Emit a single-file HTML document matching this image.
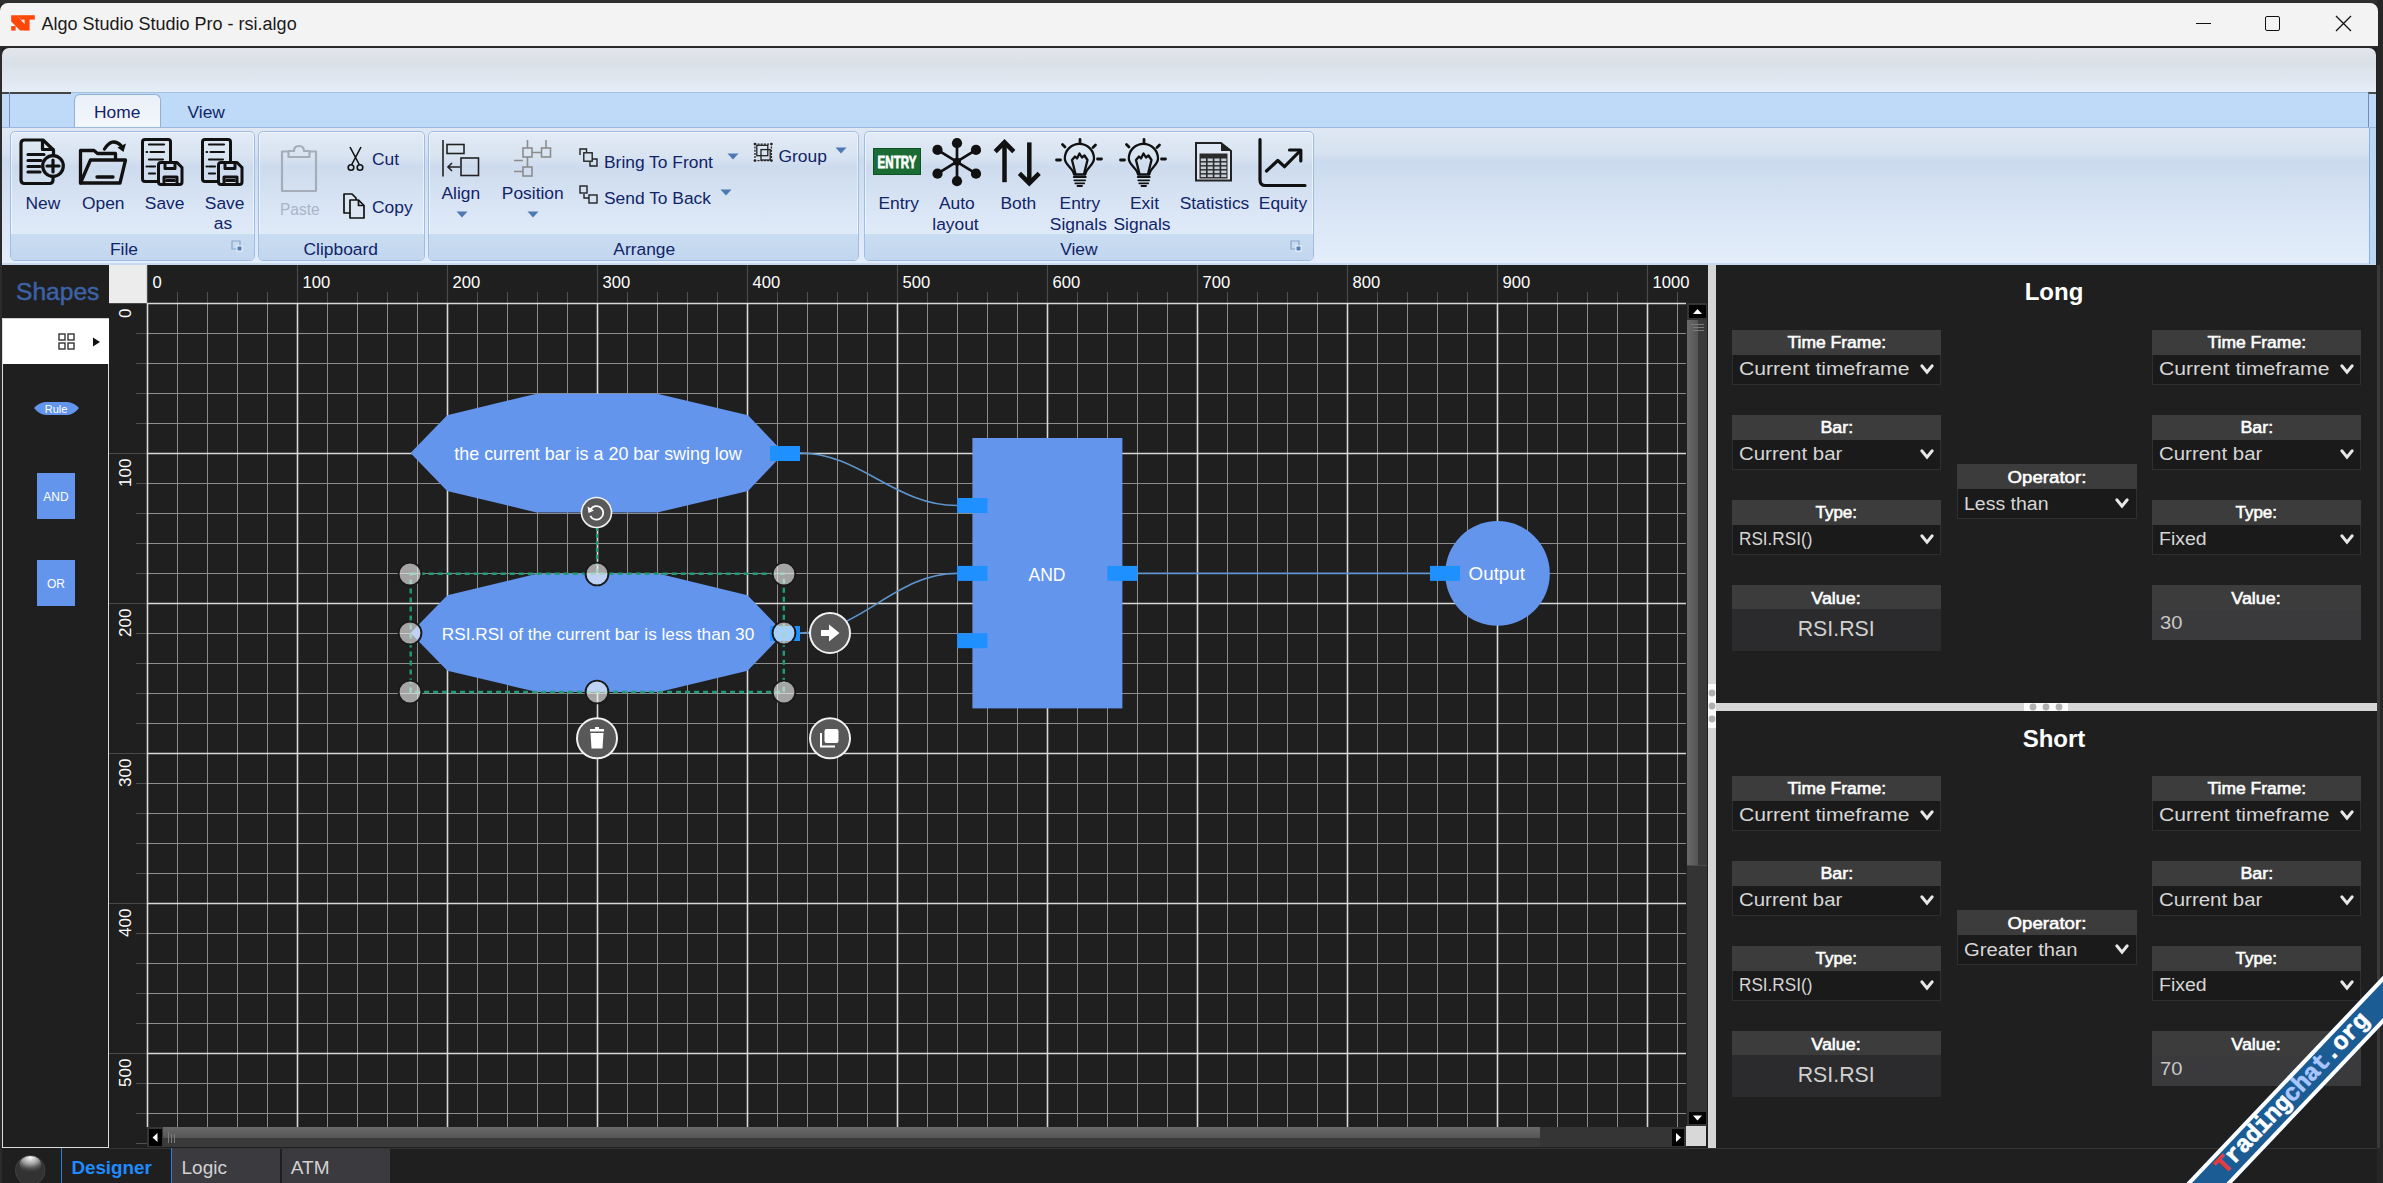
<!DOCTYPE html>
<html><head><meta charset="utf-8"><title>Algo Studio</title>
<style>
html,body{margin:0;padding:0;}
body{width:2383px;height:1183px;overflow:hidden;position:relative;background:#1f1f1f;font-family:"Liberation Sans",sans-serif;}
.t{position:absolute;line-height:1;white-space:nowrap;}
svg{position:absolute;overflow:visible;}
</style></head><body>
<div style="position:absolute;left:0px;top:0px;width:2383px;height:4px;background:#2e2e2e;"></div>
<div style="position:absolute;left:2377px;top:0px;width:6px;height:1183px;background:#262626;"></div>
<div style="position:absolute;left:0px;top:3px;width:2378px;height:43px;background:#f3f3f3;border-radius:8px 8px 0 0;"></div>
<svg style="left:0px;top:0px" width="40" height="40" viewBox="0 0 40 40"><g fill="#ff4708">
<path d="M21.4 15.2 H34.8 V19.6 H21.4 Z"/><path d="M24.6 19 H29.6 V30.6 H24.6 Z"/>
<path d="M11.2 15.2 H16.4 L25.3 24.8 V30.6 H20.1 L11.2 21.5 Z"/><path d="M11.2 26.1 H15.6 V30.6 H11.2 Z"/><path d="M16 15.2 H21.8 V20.1 H21.2 Z"/></g></svg>
<div class="t" style="left:41.5px;top:14.6px;font-size:18px;color:#1a1a1a;font-weight:400;">Algo Studio Studio Pro - rsi.algo</div>
<div style="position:absolute;left:2196px;top:23px;width:15px;height:1px;background:#111;"></div>
<div style="position:absolute;left:2265px;top:16px;width:13px;height:13px;border:1.4px solid #111;border-radius:2px;"></div>
<svg style="left:2335px;top:15px" width="17" height="17" viewBox="0 0 17 17">
<path d="M1 1 L16 16 M16 1 L1 16" stroke="#111" stroke-width="1.3"/></svg>
<div style="position:absolute;left:0px;top:46px;width:2378px;height:2px;background:#2b2b2b;"></div>
<div style="position:absolute;left:0px;top:46px;width:2px;height:1137px;background:#2b2b2b;"></div>
<div style="position:absolute;left:2px;top:48px;width:2374px;height:44px;background:linear-gradient(#e3e6eb 0%,#dae0e8 35%,#e0e7f0 70%,#e5edf7 100%);border-radius:7px 7px 0 0;"></div>
<div style="position:absolute;left:2px;top:92px;width:2374px;height:35px;background:#bedaf8;border-top:1px solid #a6bfdd;box-sizing:border-box;"></div>
<div style="position:absolute;left:2px;top:92px;width:69px;height:2px;background:#454545;"></div>
<div style="position:absolute;left:9px;top:92px;width:1px;height:35px;background:#7a98bf;"></div>
<div style="position:absolute;left:2px;top:127px;width:1px;height:137px;background:#a9c3e3;"></div>
<div style="position:absolute;left:6px;top:127px;width:1px;height:137px;background:#a9c3e3;"></div>
<div style="position:absolute;left:2368px;top:92px;width:8px;height:35px;border-left:1px solid #6f8fb8;border-top:2px solid #4a4a4a;box-sizing:border-box;"></div>
<div style="position:absolute;left:74px;top:94px;width:87px;height:34px;background:linear-gradient(#eaf0f8,#f4f7fc);border:1px solid #90b0d8;border-bottom:none;border-radius:6px 6px 0 0;box-sizing:border-box;"></div>
<div class="t" style="left:94.0px;top:104.0px;font-size:17.4px;color:#112468;font-weight:400;">Home</div>
<div class="t" style="left:187.5px;top:104.0px;font-size:17.4px;color:#112468;font-weight:400;">View</div>
<div style="position:absolute;left:2px;top:127px;width:2374px;height:138px;background:linear-gradient(#dfe8f3 0%,#d6e2f1 18%,#cbdaee 24%,#d1dff1 40%,#dae6f6 65%,#e4eefb 100%);border-top:1px solid #9ab8dd;box-sizing:border-box;"></div>
<div style="position:absolute;left:2px;top:263px;width:2374px;height:2px;background:#c8daf0;"></div>
<div style="position:absolute;left:2369px;top:128px;width:7px;height:136px;border-left:1px solid #8fb0da;box-sizing:border-box;background:#bcd6f6;"></div>
<div style="position:absolute;left:10px;top:131px;width:245px;height:130px;border:1px solid #9fbde2;border-radius:5px;box-sizing:border-box;background:linear-gradient(#e2ebf6 0%,#d8e3f1 20%,#cddbee 27%,#d3e0f1 42%,#dbe7f6 65%,#e3eefa 100%);box-shadow:inset 0 0 0 1px rgba(255,255,255,0.55);"></div>
<div style="position:absolute;left:11px;top:234px;width:243px;height:26px;background:linear-gradient(#c9dcf1,#c2d7ef);border-radius:0 0 4px 4px;"></div>
<div class="t" style="left:110.0px;top:240.7px;font-size:17.4px;color:#112468;font-weight:400;">File</div>
<svg style="left:231px;top:240px" width="12" height="12" viewBox="0 0 12 12">
<path d="M1 1 H9 V9 H1 Z" fill="none" stroke="#8aa6cc" stroke-width="1.2"/><path d="M5.5 5.5 H11.5 V11.5 H5.5 Z" fill="#f4f8fd"/><path d="M6.5 6.5 H10.5 V10.5 H6.5 Z" fill="#4f7cb8"/></svg>
<div style="position:absolute;left:258px;top:131px;width:167px;height:130px;border:1px solid #9fbde2;border-radius:5px;box-sizing:border-box;background:linear-gradient(#e2ebf6 0%,#d8e3f1 20%,#cddbee 27%,#d3e0f1 42%,#dbe7f6 65%,#e3eefa 100%);box-shadow:inset 0 0 0 1px rgba(255,255,255,0.55);"></div>
<div style="position:absolute;left:259px;top:234px;width:165px;height:26px;background:linear-gradient(#c9dcf1,#c2d7ef);border-radius:0 0 4px 4px;"></div>
<div class="t" style="left:303.5px;top:240.7px;font-size:17.4px;color:#112468;font-weight:400;">Clipboard</div>
<div style="position:absolute;left:428px;top:131px;width:431px;height:130px;border:1px solid #9fbde2;border-radius:5px;box-sizing:border-box;background:linear-gradient(#e2ebf6 0%,#d8e3f1 20%,#cddbee 27%,#d3e0f1 42%,#dbe7f6 65%,#e3eefa 100%);box-shadow:inset 0 0 0 1px rgba(255,255,255,0.55);"></div>
<div style="position:absolute;left:429px;top:234px;width:429px;height:26px;background:linear-gradient(#c9dcf1,#c2d7ef);border-radius:0 0 4px 4px;"></div>
<div class="t" style="left:613.3px;top:240.7px;font-size:17.4px;color:#112468;font-weight:400;">Arrange</div>
<div style="position:absolute;left:864px;top:131px;width:450px;height:130px;border:1px solid #9fbde2;border-radius:5px;box-sizing:border-box;background:linear-gradient(#e2ebf6 0%,#d8e3f1 20%,#cddbee 27%,#d3e0f1 42%,#dbe7f6 65%,#e3eefa 100%);box-shadow:inset 0 0 0 1px rgba(255,255,255,0.55);"></div>
<div style="position:absolute;left:865px;top:234px;width:448px;height:26px;background:linear-gradient(#c9dcf1,#c2d7ef);border-radius:0 0 4px 4px;"></div>
<div class="t" style="left:1060.2px;top:240.7px;font-size:17.4px;color:#112468;font-weight:400;">View</div>
<svg style="left:1290px;top:240px" width="12" height="12" viewBox="0 0 12 12">
<path d="M1 1 H9 V9 H1 Z" fill="none" stroke="#8aa6cc" stroke-width="1.2"/><path d="M5.5 5.5 H11.5 V11.5 H5.5 Z" fill="#f4f8fd"/><path d="M6.5 6.5 H10.5 V10.5 H6.5 Z" fill="#4f7cb8"/></svg>
<svg style="left:19px;top:138px" width="48" height="48" viewBox="0 0 48 48"><g fill="none" stroke="#111" stroke-width="3.2" stroke-linejoin="round" stroke-linecap="round">
<path d="M34.5 17 V12 L24 2 H5.5 Q2 2 2 5.5 V42 Q2 45.5 5.5 45.5 H30.5 Q34 45.5 34 42 V39"/>
<path d="M23.5 2.5 V11.5 H34"/>
<circle cx="34" cy="28" r="10.3"/>
<path d="M34 22 V34 M28 28 H40"/>
<path d="M9 16.5 H25 M9 22.5 H22 M9 28.5 H21 M9 34 H21"/></g></svg>
<svg style="left:78px;top:138px" width="50" height="48" viewBox="0 0 50 48"><g fill="none" stroke="#111" stroke-width="3.3" stroke-linejoin="round" stroke-linecap="round">
<path d="M2.5 45 V12.5 H16 L19.5 15.5 H37.5 V21.5"/>
<path d="M2.5 45 L12.5 22 H47.5 L42 45 Z"/>
<path d="M19 39 H35"/>
<path d="M26.5 11 Q34 -1 43 7.5"/></g>
<path d="M39.5 9.5 L48 5.5 L45.5 14 Z" fill="#111"/></svg>
<svg style="left:141px;top:138px" width="44" height="49" viewBox="0 0 44 49"><g fill="none" stroke="#111" stroke-width="3" stroke-linejoin="round" stroke-linecap="round">
<path d="M17 43.5 H4 Q1.5 43.5 1.5 41 V4 Q1.5 1.5 4 1.5 H27 Q29.5 1.5 29.5 4 V23"/>
<path d="M8 6.5 H23 M9.5 14 H23 M8 21.5 H22 M8 28.5 H14 M8 35.5 H14" stroke-width="2.2"/><path d="M5.5 14 H6.2 M5.5 28.5 H6.2" stroke-width="2"/>
<path d="M20 24.5 H36 L41 29.5 V44 Q41 46.5 38.5 46.5 H20 Q17.5 46.5 17.5 44 V27 Q17.5 24.5 20 24.5 Z"/>
<path d="M24 25 V30.5 H34 V25"/>
<path d="M23 46 V39 H36 V46"/><path d="M25.5 42.5 H33.5"/></g></svg>
<svg style="left:201px;top:138px" width="44" height="49" viewBox="0 0 44 49"><g fill="none" stroke="#111" stroke-width="3" stroke-linejoin="round" stroke-linecap="round">
<path d="M17 43.5 H4 Q1.5 43.5 1.5 41 V4 Q1.5 1.5 4 1.5 H27 Q29.5 1.5 29.5 4 V23"/>
<path d="M8 6.5 H23 M9.5 14 H23 M8 21.5 H22 M8 28.5 H14 M8 35.5 H14" stroke-width="2.2"/><path d="M5.5 14 H6.2 M5.5 28.5 H6.2" stroke-width="2"/>
<path d="M20 24.5 H36 L41 29.5 V44 Q41 46.5 38.5 46.5 H20 Q17.5 46.5 17.5 44 V27 Q17.5 24.5 20 24.5 Z"/>
<path d="M24 25 V30.5 H34 V25"/>
<path d="M23 46 V39 H36 V46"/><path d="M25.5 42.5 H33.5"/></g></svg>
<div class="t" style="left:25.5px;top:195.2px;font-size:17.4px;color:#112468;font-weight:400;">New</div>
<div class="t" style="left:82.0px;top:195.2px;font-size:17.4px;color:#112468;font-weight:400;">Open</div>
<div class="t" style="left:144.8px;top:195.2px;font-size:17.4px;color:#112468;font-weight:400;">Save</div>
<div class="t" style="left:204.8px;top:195.2px;font-size:17.4px;color:#112468;font-weight:400;">Save</div>
<div class="t" style="left:213.8px;top:215.4px;font-size:17.4px;color:#112468;font-weight:400;">as</div>
<svg style="left:279px;top:144px" width="40" height="50" viewBox="0 0 40 50"><g fill="none" stroke="#a4adb8" stroke-width="2.2" stroke-linejoin="round">
<path d="M9.5 7.5 H3 V47 H37 V7.5 H30.5"/>
<path d="M9.5 13 V7 H15 Q15 2 20 2 Q25 2 25 7 H30.5 V13 Z"/></g></svg>
<div class="t" style="left:279.5px;top:200.8px;font-size:17.4px;color:#a9b4c6;font-weight:400;transform:scaleX(0.89);transform-origin:0 0;">Paste</div>
<svg style="left:346px;top:146px" width="20" height="26" viewBox="0 0 20 26"><g fill="none" stroke="#111" stroke-width="1.6">
<path d="M4 1 L13.5 19 M15 1 L5.5 19"/><circle cx="5" cy="21.5" r="2.8"/><circle cx="14" cy="21.5" r="2.8"/></g></svg>
<div class="t" style="left:372.0px;top:150.8px;font-size:17.4px;color:#112468;font-weight:400;">Cut</div>
<svg style="left:343px;top:193px" width="24" height="27" viewBox="0 0 24 27"><g fill="#dce6f3" stroke="#111" stroke-width="1.7" stroke-linejoin="round">
<path d="M1 1 H9 L13 5 V20 H1 Z"/><path d="M7 7 H15.5 L21 12.5 V25 H7 Z"/><path d="M15.5 7 V12.5 H21" fill="none"/></g></svg>
<div class="t" style="left:372.0px;top:199.2px;font-size:17.4px;color:#112468;font-weight:400;">Copy</div>
<svg style="left:441px;top:139px" width="40" height="40" viewBox="0 0 40 40"><g fill="none" stroke="#222" stroke-width="1.6">
<path d="M2 1 V37.5"/><rect x="6" y="5.5" width="17" height="9"/><rect x="20" y="19" width="17.5" height="17.5"/>
<path d="M19 28 H7 M11 24 L7 28 L11 32"/></g></svg>
<div class="t" style="left:441.5px;top:184.6px;font-size:17.4px;color:#112468;font-weight:400;">Align</div>
<svg style="left:456px;top:211px" width="12" height="7" viewBox="0 0 12 7"><path d="M0.5 0.5 H11.5 L6 6.5 Z" fill="#4d79b3"/></svg>
<svg style="left:512px;top:138px" width="42" height="42" viewBox="0 0 42 42"><g fill="none" stroke="#8c8c8c" stroke-width="1.6">
<rect x="11" y="10" width="9" height="9"/><rect x="29.5" y="10" width="9" height="9"/><rect x="11" y="29" width="9" height="9"/>
<path d="M20 14.5 H29.5 M15.5 19 V29 M2 22.5 H11 M2 33.5 H11 M15.5 2 V10 M34 2 V10"/></g></svg>
<div class="t" style="left:501.8px;top:184.6px;font-size:17.4px;color:#112468;font-weight:400;">Position</div>
<svg style="left:527px;top:211px" width="12" height="7" viewBox="0 0 12 7"><path d="M0.5 0.5 H11.5 L6 6.5 Z" fill="#4d79b3"/></svg>
<svg style="left:579px;top:148px" width="20" height="20" viewBox="0 0 20 20"><g fill="none" stroke="#222" stroke-width="1.4">
<path d="M1 7 V1 H7.5 V4.5"/><rect x="4.8" y="4.8" width="8.4" height="8.4"/><path d="M13.2 11 H18 V18 H11 V13.2"/></g></svg>
<div class="t" style="left:604.0px;top:153.5px;font-size:17.4px;color:#112468;font-weight:400;">Bring To Front</div>
<svg style="left:727px;top:153px" width="12" height="7" viewBox="0 0 12 7"><path d="M0.5 0.5 H11.5 L6 6.5 Z" fill="#4d79b3"/></svg>
<svg style="left:579px;top:185px" width="20" height="20" viewBox="0 0 20 20"><g fill="none" stroke="#222" stroke-width="1.4">
<rect x="1" y="1" width="7" height="7"/><path d="M5 9 V13 H10"/><rect x="10" y="10" width="8" height="8"/></g></svg>
<div class="t" style="left:604.0px;top:189.9px;font-size:17.4px;color:#112468;font-weight:400;">Send To Back</div>
<svg style="left:720px;top:189px" width="12" height="7" viewBox="0 0 12 7"><path d="M0.5 0.5 H11.5 L6 6.5 Z" fill="#4d79b3"/></svg>
<svg style="left:753px;top:142px" width="21" height="21" viewBox="0 0 21 21"><g fill="none" stroke="#222" stroke-width="1.3">
<path d="M2 4.5 V16 M18.4 4.5 V16 M4.5 2.1 H16 M4.5 18.6 H16" stroke-dasharray="2 1.2"/>
<rect x="3.8" y="3.3" width="11" height="10.4"/><rect x="8" y="7.6" width="9.2" height="10.4"/></g>
<g fill="#222"><circle cx="2" cy="2.1" r="1.4"/><circle cx="18.4" cy="2.1" r="1.4"/><circle cx="2" cy="18.6" r="1.4"/><circle cx="18.4" cy="18.6" r="1.4"/></g></svg>
<div class="t" style="left:778.5px;top:148.2px;font-size:17.4px;color:#112468;font-weight:400;">Group</div>
<svg style="left:835px;top:147px" width="12" height="7" viewBox="0 0 12 7"><path d="M0.5 0.5 H11.5 L6 6.5 Z" fill="#4d79b3"/></svg>
<div style="position:absolute;left:873px;top:148px;width:48px;height:27px;background:#1a6c34;border:1px solid #0f5224;box-sizing:border-box;"></div>
<div class="t" style="left:857.0px;width:80px;text-align:center;top:153.6px;font-size:17px;color:#fff;font-weight:700;transform:scaleX(0.68);-webkit-text-stroke:0.8px #fff;">ENTRY</div>
<div class="t" style="left:878.4px;top:195.2px;font-size:17.4px;color:#112468;font-weight:400;">Entry</div>
<svg style="left:931px;top:136px" width="52" height="52" viewBox="0 0 52 52"><g stroke="#111" stroke-width="2.7"><path d="M26 7 V45 M6.5 13.9 L45 37.7 M45 13.9 L6.5 37.7"/></g>
<g fill="#111"><circle cx="26" cy="7.2" r="5.1"/><circle cx="26" cy="45.2" r="5.1"/><circle cx="6.5" cy="13.9" r="5.1"/><circle cx="45" cy="13.9" r="5.1"/><circle cx="6.5" cy="37.7" r="5.1"/><circle cx="45" cy="37.7" r="5.1"/><circle cx="26" cy="25.8" r="4"/></g></svg>
<div class="t" style="left:939.0px;top:195.2px;font-size:17.4px;color:#112468;font-weight:400;">Auto</div>
<div class="t" style="left:932.3px;top:216.0px;font-size:17.4px;color:#112468;font-weight:400;">layout</div>
<svg style="left:992px;top:138px" width="50" height="50" viewBox="0 0 50 50"><g fill="none" stroke="#111" stroke-width="4.5" stroke-linejoin="miter" stroke-linecap="butt">
<path d="M12.5 44.2 V4"/><path d="M3.2 13.6 L12.5 4.3 L21.8 13.6"/>
<path d="M37.3 4.4 V44"/><path d="M27.4 35.3 L37.3 45.2 L47.2 35.3"/></g></svg>
<div class="t" style="left:1000.4px;top:195.2px;font-size:17.4px;color:#112468;font-weight:400;">Both</div>
<svg style="left:1055px;top:138px" width="48" height="49" viewBox="0 0 48 49"><g fill="none" stroke="#111" stroke-width="2.3" stroke-linecap="round" stroke-linejoin="round">
<path d="M19 36.5 C 18.5 30.5, 9.8 27, 9.8 20.5 A 14.6 14.6 0 0 1 39 20.5 C 39 27, 30.8 30.5, 30.3 36.5 Z"/>
<path d="M20.5 36 L17 22 L20 18.5 L22 20.5 L24.5 15.5 L27 19.5 L29.5 17.5 L32.5 22 L29 36"/>
<path d="M18.8 39 H30.7" stroke-width="2"/><path d="M19.3 42.3 H30.2" stroke-width="1.8"/><path d="M20.3 45.3 H29.2" stroke-width="1.8"/><path d="M22.5 48 H27" stroke-width="1.8"/></g>
<g stroke="#111" stroke-width="2.8" stroke-linecap="round"><path d="M25 1.5 V5 M7.5 6.5 L10 9 M40.5 7 L38 9.5 M1.5 22 H5.5 M42.5 21 H46.5"/></g></svg>
<div class="t" style="left:1059.6px;top:195.2px;font-size:17.4px;color:#112468;font-weight:400;">Entry</div>
<div class="t" style="left:1049.8px;top:216.0px;font-size:17.4px;color:#112468;font-weight:400;">Signals</div>
<svg style="left:1119px;top:138px" width="48" height="49" viewBox="0 0 48 49"><g fill="none" stroke="#111" stroke-width="2.3" stroke-linecap="round" stroke-linejoin="round">
<path d="M19 36.5 C 18.5 30.5, 9.8 27, 9.8 20.5 A 14.6 14.6 0 0 1 39 20.5 C 39 27, 30.8 30.5, 30.3 36.5 Z"/>
<path d="M20.5 36 L17 22 L20 18.5 L22 20.5 L24.5 15.5 L27 19.5 L29.5 17.5 L32.5 22 L29 36"/>
<path d="M18.8 39 H30.7" stroke-width="2"/><path d="M19.3 42.3 H30.2" stroke-width="1.8"/><path d="M20.3 45.3 H29.2" stroke-width="1.8"/><path d="M22.5 48 H27" stroke-width="1.8"/></g>
<g stroke="#111" stroke-width="2.8" stroke-linecap="round"><path d="M25 1.5 V5 M7.5 6.5 L10 9 M40.5 7 L38 9.5 M1.5 22 H5.5 M42.5 21 H46.5"/></g></svg>
<div class="t" style="left:1130.0px;top:195.2px;font-size:17.4px;color:#112468;font-weight:400;">Exit</div>
<div class="t" style="left:1113.5px;top:216.0px;font-size:17.4px;color:#112468;font-weight:400;">Signals</div>
<svg style="left:1194px;top:141px" width="40" height="42" viewBox="0 0 40 42"><path d="M2 2 H27 L37 10 V39.5 H2 Z" fill="#dfe8f4" stroke="#222" stroke-width="2"/>
<path d="M27 2 L37 10 H27 Z" fill="#222"/>
<rect x="5.5" y="12.5" width="28" height="25" fill="#2a2a2a"/>
<g fill="#c4ccd6"><rect x="6.8" y="17.5" width="5.2" height="2.6"/><rect x="6.8" y="21.5" width="5.2" height="2.6"/><rect x="6.8" y="25.5" width="5.2" height="2.6"/><rect x="6.8" y="29.5" width="5.2" height="2.6"/><rect x="6.8" y="33.5" width="5.2" height="2.6"/><rect x="13.6" y="17.5" width="5.2" height="2.6"/><rect x="13.6" y="21.5" width="5.2" height="2.6"/><rect x="13.6" y="25.5" width="5.2" height="2.6"/><rect x="13.6" y="29.5" width="5.2" height="2.6"/><rect x="13.6" y="33.5" width="5.2" height="2.6"/><rect x="20.4" y="17.5" width="5.2" height="2.6"/><rect x="20.4" y="21.5" width="5.2" height="2.6"/><rect x="20.4" y="25.5" width="5.2" height="2.6"/><rect x="20.4" y="29.5" width="5.2" height="2.6"/><rect x="20.4" y="33.5" width="5.2" height="2.6"/><rect x="27.2" y="17.5" width="5.2" height="2.6"/><rect x="27.2" y="21.5" width="5.2" height="2.6"/><rect x="27.2" y="25.5" width="5.2" height="2.6"/><rect x="27.2" y="29.5" width="5.2" height="2.6"/><rect x="27.2" y="33.5" width="5.2" height="2.6"/></g></svg>
<div class="t" style="left:1179.7px;top:195.2px;font-size:17.4px;color:#112468;font-weight:400;">Statistics</div>
<svg style="left:1257px;top:137px" width="52" height="52" viewBox="0 0 52 52"><g fill="none" stroke="#111" stroke-width="3.2" stroke-linecap="round" stroke-linejoin="round">
<path d="M3 2.5 V43 Q3 48.5 8.5 48.5 H48"/><path d="M9.5 34 L20.8 23.5 L27.5 29.7 L43 14"/><path d="M32.5 13 H43.8 V24"/></g></svg>
<div class="t" style="left:1258.8px;top:195.2px;font-size:17.4px;color:#112468;font-weight:400;">Equity</div>
<div class="t" style="left:16.0px;top:280.2px;font-size:24.6px;color:#3d62a6;font-weight:400;-webkit-text-stroke:0.45px #3d62a6;">Shapes</div>
<div style="position:absolute;left:2px;top:318px;width:107px;height:830px;border:1.5px solid #dcdcdc;border-top:none;box-sizing:border-box;"></div>
<div style="position:absolute;left:3px;top:318px;width:106px;height:46px;background:#fff;border-top:1.5px solid #d0d0d0;box-sizing:border-box;"></div>
<svg style="left:58px;top:333px" width="18" height="18" viewBox="0 0 18 18"><g fill="none" stroke="#333" stroke-width="1.4"><rect x="1" y="1" width="6" height="6"/><rect x="10" y="1" width="6" height="6"/><rect x="1" y="10" width="6" height="6"/><rect x="10" y="10" width="6" height="6"/></g></svg>
<svg style="left:92px;top:337px" width="9" height="11" viewBox="0 0 9 11"><path d="M1 0.5 L8 5 L1 9.5 Z" fill="#111"/></svg>
<svg style="left:33px;top:401px" width="47" height="16" viewBox="0 0 47 16"><path d="M1 7 Q6 1.5 13 1 H34 Q41 1.5 46 7 Q41 13.5 34 14 H13 Q6 13.5 1 7 Z" fill="#6495ed"/></svg>
<div class="t" style="left:36.0px;width:40px;text-align:center;top:404.0px;font-size:11px;color:#fff;font-weight:400;">Rule</div>
<div style="position:absolute;left:37px;top:473px;width:38px;height:46px;background:#6495ed;"></div>
<div class="t" style="left:37.0px;width:38px;text-align:center;top:491.3px;font-size:12px;color:#fff;font-weight:400;">AND</div>
<div style="position:absolute;left:37px;top:560px;width:38px;height:46px;background:#6495ed;"></div>
<div class="t" style="left:37.0px;width:38px;text-align:center;top:578.3px;font-size:12px;color:#fff;font-weight:400;">OR</div>
<div style="position:absolute;left:109px;top:265px;width:38px;height:38px;background:#ececec;"></div>
<svg style="left:0;top:0" width="2383" height="1183"><path d="M147.5 265 V303" stroke="#4a4a4a" stroke-width="1.2"/><path d="M177.5 292 V303" stroke="#505050" stroke-width="1"/><path d="M207.5 292 V303" stroke="#505050" stroke-width="1"/><path d="M237.5 292 V303" stroke="#505050" stroke-width="1"/><path d="M267.5 292 V303" stroke="#505050" stroke-width="1"/><path d="M297.5 265 V303" stroke="#4a4a4a" stroke-width="1.2"/><path d="M327.5 292 V303" stroke="#505050" stroke-width="1"/><path d="M357.5 292 V303" stroke="#505050" stroke-width="1"/><path d="M387.5 292 V303" stroke="#505050" stroke-width="1"/><path d="M417.5 292 V303" stroke="#505050" stroke-width="1"/><path d="M447.5 265 V303" stroke="#4a4a4a" stroke-width="1.2"/><path d="M477.5 292 V303" stroke="#505050" stroke-width="1"/><path d="M507.5 292 V303" stroke="#505050" stroke-width="1"/><path d="M537.5 292 V303" stroke="#505050" stroke-width="1"/><path d="M567.5 292 V303" stroke="#505050" stroke-width="1"/><path d="M597.5 265 V303" stroke="#4a4a4a" stroke-width="1.2"/><path d="M627.5 292 V303" stroke="#505050" stroke-width="1"/><path d="M657.5 292 V303" stroke="#505050" stroke-width="1"/><path d="M687.5 292 V303" stroke="#505050" stroke-width="1"/><path d="M717.5 292 V303" stroke="#505050" stroke-width="1"/><path d="M747.5 265 V303" stroke="#4a4a4a" stroke-width="1.2"/><path d="M777.5 292 V303" stroke="#505050" stroke-width="1"/><path d="M807.5 292 V303" stroke="#505050" stroke-width="1"/><path d="M837.5 292 V303" stroke="#505050" stroke-width="1"/><path d="M867.5 292 V303" stroke="#505050" stroke-width="1"/><path d="M897.5 265 V303" stroke="#4a4a4a" stroke-width="1.2"/><path d="M927.5 292 V303" stroke="#505050" stroke-width="1"/><path d="M957.5 292 V303" stroke="#505050" stroke-width="1"/><path d="M987.5 292 V303" stroke="#505050" stroke-width="1"/><path d="M1017.5 292 V303" stroke="#505050" stroke-width="1"/><path d="M1047.5 265 V303" stroke="#4a4a4a" stroke-width="1.2"/><path d="M1077.5 292 V303" stroke="#505050" stroke-width="1"/><path d="M1107.5 292 V303" stroke="#505050" stroke-width="1"/><path d="M1137.5 292 V303" stroke="#505050" stroke-width="1"/><path d="M1167.5 292 V303" stroke="#505050" stroke-width="1"/><path d="M1197.5 265 V303" stroke="#4a4a4a" stroke-width="1.2"/><path d="M1227.5 292 V303" stroke="#505050" stroke-width="1"/><path d="M1257.5 292 V303" stroke="#505050" stroke-width="1"/><path d="M1287.5 292 V303" stroke="#505050" stroke-width="1"/><path d="M1317.5 292 V303" stroke="#505050" stroke-width="1"/><path d="M1347.5 265 V303" stroke="#4a4a4a" stroke-width="1.2"/><path d="M1377.5 292 V303" stroke="#505050" stroke-width="1"/><path d="M1407.5 292 V303" stroke="#505050" stroke-width="1"/><path d="M1437.5 292 V303" stroke="#505050" stroke-width="1"/><path d="M1467.5 292 V303" stroke="#505050" stroke-width="1"/><path d="M1497.5 265 V303" stroke="#4a4a4a" stroke-width="1.2"/><path d="M1527.5 292 V303" stroke="#505050" stroke-width="1"/><path d="M1557.5 292 V303" stroke="#505050" stroke-width="1"/><path d="M1587.5 292 V303" stroke="#505050" stroke-width="1"/><path d="M1617.5 292 V303" stroke="#505050" stroke-width="1"/><path d="M1647.5 265 V303" stroke="#4a4a4a" stroke-width="1.2"/><path d="M1677.5 292 V303" stroke="#505050" stroke-width="1"/><path d="M109 303.5 H147" stroke="#4a4a4a" stroke-width="1.2"/><path d="M136 333.5 H147" stroke="#505050" stroke-width="1"/><path d="M136 363.5 H147" stroke="#505050" stroke-width="1"/><path d="M136 393.5 H147" stroke="#505050" stroke-width="1"/><path d="M136 423.5 H147" stroke="#505050" stroke-width="1"/><path d="M109 453.5 H147" stroke="#4a4a4a" stroke-width="1.2"/><path d="M136 483.5 H147" stroke="#505050" stroke-width="1"/><path d="M136 513.5 H147" stroke="#505050" stroke-width="1"/><path d="M136 543.5 H147" stroke="#505050" stroke-width="1"/><path d="M136 573.5 H147" stroke="#505050" stroke-width="1"/><path d="M109 603.5 H147" stroke="#4a4a4a" stroke-width="1.2"/><path d="M136 633.5 H147" stroke="#505050" stroke-width="1"/><path d="M136 663.5 H147" stroke="#505050" stroke-width="1"/><path d="M136 693.5 H147" stroke="#505050" stroke-width="1"/><path d="M136 723.5 H147" stroke="#505050" stroke-width="1"/><path d="M109 753.5 H147" stroke="#4a4a4a" stroke-width="1.2"/><path d="M136 783.5 H147" stroke="#505050" stroke-width="1"/><path d="M136 813.5 H147" stroke="#505050" stroke-width="1"/><path d="M136 843.5 H147" stroke="#505050" stroke-width="1"/><path d="M136 873.5 H147" stroke="#505050" stroke-width="1"/><path d="M109 903.5 H147" stroke="#4a4a4a" stroke-width="1.2"/><path d="M136 933.5 H147" stroke="#505050" stroke-width="1"/><path d="M136 963.5 H147" stroke="#505050" stroke-width="1"/><path d="M136 993.5 H147" stroke="#505050" stroke-width="1"/><path d="M136 1023.5 H147" stroke="#505050" stroke-width="1"/><path d="M109 1053.5 H147" stroke="#4a4a4a" stroke-width="1.2"/><path d="M136 1083.5 H147" stroke="#505050" stroke-width="1"/><path d="M136 1113.5 H147" stroke="#505050" stroke-width="1"/><path d="M136 1143.5 H147" stroke="#505050" stroke-width="1"/><path d="M177.5 303 V1127" stroke="#8c8c8c" stroke-width="1"/><path d="M207.5 303 V1127" stroke="#8c8c8c" stroke-width="1"/><path d="M237.5 303 V1127" stroke="#8c8c8c" stroke-width="1"/><path d="M267.5 303 V1127" stroke="#8c8c8c" stroke-width="1"/><path d="M327.5 303 V1127" stroke="#8c8c8c" stroke-width="1"/><path d="M357.5 303 V1127" stroke="#8c8c8c" stroke-width="1"/><path d="M387.5 303 V1127" stroke="#8c8c8c" stroke-width="1"/><path d="M417.5 303 V1127" stroke="#8c8c8c" stroke-width="1"/><path d="M477.5 303 V1127" stroke="#8c8c8c" stroke-width="1"/><path d="M507.5 303 V1127" stroke="#8c8c8c" stroke-width="1"/><path d="M537.5 303 V1127" stroke="#8c8c8c" stroke-width="1"/><path d="M567.5 303 V1127" stroke="#8c8c8c" stroke-width="1"/><path d="M627.5 303 V1127" stroke="#8c8c8c" stroke-width="1"/><path d="M657.5 303 V1127" stroke="#8c8c8c" stroke-width="1"/><path d="M687.5 303 V1127" stroke="#8c8c8c" stroke-width="1"/><path d="M717.5 303 V1127" stroke="#8c8c8c" stroke-width="1"/><path d="M777.5 303 V1127" stroke="#8c8c8c" stroke-width="1"/><path d="M807.5 303 V1127" stroke="#8c8c8c" stroke-width="1"/><path d="M837.5 303 V1127" stroke="#8c8c8c" stroke-width="1"/><path d="M867.5 303 V1127" stroke="#8c8c8c" stroke-width="1"/><path d="M927.5 303 V1127" stroke="#8c8c8c" stroke-width="1"/><path d="M957.5 303 V1127" stroke="#8c8c8c" stroke-width="1"/><path d="M987.5 303 V1127" stroke="#8c8c8c" stroke-width="1"/><path d="M1017.5 303 V1127" stroke="#8c8c8c" stroke-width="1"/><path d="M1077.5 303 V1127" stroke="#8c8c8c" stroke-width="1"/><path d="M1107.5 303 V1127" stroke="#8c8c8c" stroke-width="1"/><path d="M1137.5 303 V1127" stroke="#8c8c8c" stroke-width="1"/><path d="M1167.5 303 V1127" stroke="#8c8c8c" stroke-width="1"/><path d="M1227.5 303 V1127" stroke="#8c8c8c" stroke-width="1"/><path d="M1257.5 303 V1127" stroke="#8c8c8c" stroke-width="1"/><path d="M1287.5 303 V1127" stroke="#8c8c8c" stroke-width="1"/><path d="M1317.5 303 V1127" stroke="#8c8c8c" stroke-width="1"/><path d="M1377.5 303 V1127" stroke="#8c8c8c" stroke-width="1"/><path d="M1407.5 303 V1127" stroke="#8c8c8c" stroke-width="1"/><path d="M1437.5 303 V1127" stroke="#8c8c8c" stroke-width="1"/><path d="M1467.5 303 V1127" stroke="#8c8c8c" stroke-width="1"/><path d="M1527.5 303 V1127" stroke="#8c8c8c" stroke-width="1"/><path d="M1557.5 303 V1127" stroke="#8c8c8c" stroke-width="1"/><path d="M1587.5 303 V1127" stroke="#8c8c8c" stroke-width="1"/><path d="M1617.5 303 V1127" stroke="#8c8c8c" stroke-width="1"/><path d="M1677.5 303 V1127" stroke="#8c8c8c" stroke-width="1"/><path d="M147 333.5 H1686" stroke="#8c8c8c" stroke-width="1"/><path d="M147 363.5 H1686" stroke="#8c8c8c" stroke-width="1"/><path d="M147 393.5 H1686" stroke="#8c8c8c" stroke-width="1"/><path d="M147 423.5 H1686" stroke="#8c8c8c" stroke-width="1"/><path d="M147 483.5 H1686" stroke="#8c8c8c" stroke-width="1"/><path d="M147 513.5 H1686" stroke="#8c8c8c" stroke-width="1"/><path d="M147 543.5 H1686" stroke="#8c8c8c" stroke-width="1"/><path d="M147 573.5 H1686" stroke="#8c8c8c" stroke-width="1"/><path d="M147 633.5 H1686" stroke="#8c8c8c" stroke-width="1"/><path d="M147 663.5 H1686" stroke="#8c8c8c" stroke-width="1"/><path d="M147 693.5 H1686" stroke="#8c8c8c" stroke-width="1"/><path d="M147 723.5 H1686" stroke="#8c8c8c" stroke-width="1"/><path d="M147 783.5 H1686" stroke="#8c8c8c" stroke-width="1"/><path d="M147 813.5 H1686" stroke="#8c8c8c" stroke-width="1"/><path d="M147 843.5 H1686" stroke="#8c8c8c" stroke-width="1"/><path d="M147 873.5 H1686" stroke="#8c8c8c" stroke-width="1"/><path d="M147 933.5 H1686" stroke="#8c8c8c" stroke-width="1"/><path d="M147 963.5 H1686" stroke="#8c8c8c" stroke-width="1"/><path d="M147 993.5 H1686" stroke="#8c8c8c" stroke-width="1"/><path d="M147 1023.5 H1686" stroke="#8c8c8c" stroke-width="1"/><path d="M147 1083.5 H1686" stroke="#8c8c8c" stroke-width="1"/><path d="M147 1113.5 H1686" stroke="#8c8c8c" stroke-width="1"/><path d="M147.5 303 V1127" stroke="#d8d8d8" stroke-width="1.6"/><path d="M297.5 303 V1127" stroke="#d8d8d8" stroke-width="1.6"/><path d="M447.5 303 V1127" stroke="#d8d8d8" stroke-width="1.6"/><path d="M597.5 303 V1127" stroke="#d8d8d8" stroke-width="1.6"/><path d="M747.5 303 V1127" stroke="#d8d8d8" stroke-width="1.6"/><path d="M897.5 303 V1127" stroke="#d8d8d8" stroke-width="1.6"/><path d="M1047.5 303 V1127" stroke="#d8d8d8" stroke-width="1.6"/><path d="M1197.5 303 V1127" stroke="#d8d8d8" stroke-width="1.6"/><path d="M1347.5 303 V1127" stroke="#d8d8d8" stroke-width="1.6"/><path d="M1497.5 303 V1127" stroke="#d8d8d8" stroke-width="1.6"/><path d="M1647.5 303 V1127" stroke="#d8d8d8" stroke-width="1.6"/><path d="M147 303.5 H1686" stroke="#d8d8d8" stroke-width="1.6"/><path d="M147 453.5 H1686" stroke="#d8d8d8" stroke-width="1.6"/><path d="M147 603.5 H1686" stroke="#d8d8d8" stroke-width="1.6"/><path d="M147 753.5 H1686" stroke="#d8d8d8" stroke-width="1.6"/><path d="M147 903.5 H1686" stroke="#d8d8d8" stroke-width="1.6"/><path d="M147 1053.5 H1686" stroke="#d8d8d8" stroke-width="1.6"/></svg>
<div class="t" style="left:152.5px;top:274.7px;font-size:16.6px;color:#fff;font-weight:400;">0</div>
<div class="t" style="left:302.5px;top:274.7px;font-size:16.6px;color:#fff;font-weight:400;">100</div>
<div class="t" style="left:452.5px;top:274.7px;font-size:16.6px;color:#fff;font-weight:400;">200</div>
<div class="t" style="left:602.5px;top:274.7px;font-size:16.6px;color:#fff;font-weight:400;">300</div>
<div class="t" style="left:752.5px;top:274.7px;font-size:16.6px;color:#fff;font-weight:400;">400</div>
<div class="t" style="left:902.5px;top:274.7px;font-size:16.6px;color:#fff;font-weight:400;">500</div>
<div class="t" style="left:1052.5px;top:274.7px;font-size:16.6px;color:#fff;font-weight:400;">600</div>
<div class="t" style="left:1202.5px;top:274.7px;font-size:16.6px;color:#fff;font-weight:400;">700</div>
<div class="t" style="left:1352.5px;top:274.7px;font-size:16.6px;color:#fff;font-weight:400;">800</div>
<div class="t" style="left:1502.5px;top:274.7px;font-size:16.6px;color:#fff;font-weight:400;">900</div>
<div class="t" style="left:1652.5px;top:274.7px;font-size:16.6px;color:#fff;font-weight:400;">1000</div>
<div class="t" style="left:117.3px;top:317.9px;font-size:17px;color:#fff;transform:rotate(-90deg);transform-origin:0 0;">0</div>
<div class="t" style="left:117.3px;top:486.9px;font-size:17px;color:#fff;transform:rotate(-90deg);transform-origin:0 0;">100</div>
<div class="t" style="left:117.3px;top:636.9px;font-size:17px;color:#fff;transform:rotate(-90deg);transform-origin:0 0;">200</div>
<div class="t" style="left:117.3px;top:786.9px;font-size:17px;color:#fff;transform:rotate(-90deg);transform-origin:0 0;">300</div>
<div class="t" style="left:117.3px;top:936.9px;font-size:17px;color:#fff;transform:rotate(-90deg);transform-origin:0 0;">400</div>
<div class="t" style="left:117.3px;top:1086.8px;font-size:17px;color:#fff;transform:rotate(-90deg);transform-origin:0 0;">500</div>
<svg style="left:0;top:0" width="2383" height="1183"><g fill="none" stroke="#5e95cf" stroke-width="1.6"><path d="M800 453 C 860 453, 895 505.5, 957 505.5"/><path d="M800 633 C 860 633, 895 573.4, 957 573.4"/><path d="M1137 573.4 H1430"/></g><polygon points="410.5,453 447.2,415.2 536.6,393.7 657.3,393.7 748,415.2 784,453 748,491 657.3,512.5 536.6,512.5 447.2,491" fill="#6495ed"/><polygon points="410.5,633 447.4,595.3 537,573.8 659,573.8 747.5,595.3 784,633 747.5,670.8 659,692 537,692 447.4,670.8" fill="#6495ed"/><rect x="770" y="446" width="30" height="15" fill="#1e90ff"/><rect x="770" y="626" width="30" height="15" fill="#1e90ff"/><rect x="972.4" y="438" width="150" height="270.4" fill="#6495ed"/><rect x="957" y="498.0" width="30.5" height="15" fill="#1e90ff"/><rect x="957" y="565.9" width="30.5" height="15" fill="#1e90ff"/><rect x="957" y="633.2" width="30.5" height="15" fill="#1e90ff"/><rect x="1107.3" y="565.9" width="30" height="15" fill="#1e90ff"/><circle cx="1497.5" cy="573.4" r="52.3" fill="#6495ed"/><rect x="1430" y="565.9" width="30" height="15" fill="#1e90ff"/><path d="M597 527 V574" stroke="#1f9c78" stroke-width="2.2" stroke-dasharray="4 3"/><rect x="410.7" y="573.8" width="373.1" height="118.2" fill="none" stroke="#1f9c78" stroke-width="2.4" stroke-dasharray="5 4"/><circle cx="410" cy="574" r="11.4" fill="rgba(247,247,247,0.62)" stroke="#1a1a1a" stroke-width="1.9"/><circle cx="597" cy="574" r="11.4" fill="rgba(247,247,247,0.62)" stroke="#1a1a1a" stroke-width="1.9"/><circle cx="784" cy="574" r="11.4" fill="rgba(247,247,247,0.62)" stroke="#1a1a1a" stroke-width="1.9"/><circle cx="410" cy="633" r="11.4" fill="rgba(247,247,247,0.62)" stroke="#1a1a1a" stroke-width="1.9"/><circle cx="784" cy="633" r="11.4" fill="rgba(247,247,247,0.62)" stroke="#1a1a1a" stroke-width="1.9"/><circle cx="410" cy="692" r="11.4" fill="rgba(247,247,247,0.62)" stroke="#1a1a1a" stroke-width="1.9"/><circle cx="597" cy="692" r="11.4" fill="rgba(247,247,247,0.62)" stroke="#1a1a1a" stroke-width="1.9"/><circle cx="784" cy="692" r="11.4" fill="rgba(247,247,247,0.62)" stroke="#1a1a1a" stroke-width="1.9"/><circle cx="596.5" cy="512.5" r="15" fill="#595959" stroke="#f0f0f0" stroke-width="1.6"/><path d="M590.5 509.5 A6.8 6.8 0 1 1 590.3 515.8" fill="none" stroke="#fff" stroke-width="1.8"/><path d="M587.5 506.5 L588.5 513 L594 510.5 Z" fill="#fff"/><circle cx="830" cy="633" r="20" fill="#585858" stroke="#f2f2f2" stroke-width="2"/><circle cx="597" cy="738.3" r="20" fill="#585858" stroke="#f2f2f2" stroke-width="2"/><circle cx="830" cy="738.3" r="20" fill="#585858" stroke="#f2f2f2" stroke-width="2"/><path d="M821 630 H829 V624.5 L839.5 633 L829 641.5 V636 H821 Z" fill="#fff"/><path d="M590 729 H604 V731.5 H590 Z M595 727 H599 V729 H595 Z M590.5 733 H603.5 L602.5 748.5 H591.5 Z" fill="#fff"/><rect x="824.5" y="729" width="14" height="14" rx="2" fill="#fff"/><path d="M821 733 V746.5 H835" fill="none" stroke="#fff" stroke-width="2"/></svg>
<div class="t" style="left:398.0px;width:400px;text-align:center;top:445.8px;font-size:17.9px;color:#fff;font-weight:400;">the current bar is a 20 bar swing low</div>
<div class="t" style="left:398.0px;width:400px;text-align:center;top:626.0px;font-size:17.2px;color:#fff;font-weight:400;">RSI.RSI of the current bar is less than 30</div>
<div class="t" style="left:1007.0px;width:80px;text-align:center;top:566.7px;font-size:17.5px;color:#fff;font-weight:400;">AND</div>
<div class="t" style="left:1446.8px;width:100px;text-align:center;top:564.6px;font-size:18.8px;color:#fff;font-weight:400;">Output</div>
<div style="position:absolute;left:1687px;top:303px;width:20px;height:824px;background:#343434;"></div>
<div style="position:absolute;left:1689px;top:305px;width:17px;height:12.5px;background:#000;"></div>
<svg style="left:1691px;top:307px" width="13" height="9" viewBox="0 0 13 9"><path d="M2 7 L6.5 2 L11 7 Z" fill="#fff"/></svg>
<div style="position:absolute;left:1687px;top:320px;width:11px;height:545px;background:linear-gradient(90deg,#6a6a6a,#545454);"></div>
<div style="position:absolute;left:1698px;top:320px;width:9px;height:545px;background:#3a3a3a;"></div>
<div style="position:absolute;left:1687px;top:865px;width:20px;height:1px;background:#4a4a4a;"></div>
<div style="position:absolute;left:1689px;top:1112px;width:17px;height:12px;background:#000;"></div>
<svg style="left:1691px;top:1113px" width="13" height="9" viewBox="0 0 13 9"><path d="M2 2.5 L11 2.5 L6.5 7.5 Z" fill="#fff"/></svg>
<div style="position:absolute;left:147px;top:1127px;width:1540px;height:20px;background:#353535;"></div>
<div style="position:absolute;left:149px;top:1129px;width:12.5px;height:17px;background:#000;"></div>
<svg style="left:150px;top:1130px" width="10" height="15" viewBox="0 0 10 15"><path d="M7.5 3 V12 L2.5 7.5 Z" fill="#fff"/></svg>
<div style="position:absolute;left:163px;top:1127px;width:1377px;height:11px;background:linear-gradient(#6a6a6a,#555);"></div>
<div style="position:absolute;left:163px;top:1138px;width:1377px;height:9px;background:#3a3a3a;"></div>
<svg style="left:166px;top:1131px" width="12" height="13" viewBox="0 0 12 13"><g stroke="#7a7a7a" stroke-width="1"><path d="M2.5 1 V12 M5.5 3 V12 M8.5 3 V12"/></g></svg>
<svg style="left:1690px;top:322px" width="16" height="12" viewBox="0 0 16 12"><g stroke="#7a7a7a" stroke-width="1"><path d="M1 2.5 H14 M3 5.5 H14 M3 8.5 H14"/></g></svg>
<div style="position:absolute;left:1672px;top:1129px;width:12px;height:17px;background:#000;"></div>
<svg style="left:1673px;top:1130px" width="10" height="15" viewBox="0 0 10 15"><path d="M3 3 V12 L8 7.5 Z" fill="#fff"/></svg>
<div style="position:absolute;left:1686px;top:1126px;width:20px;height:20px;background:#d8d8d8;"></div>
<div style="position:absolute;left:1708px;top:265px;width:8px;height:883px;background:#d6d6d6;"></div>
<div style="position:absolute;left:1708px;top:684px;width:8px;height:44px;background:#fbfbfb;"></div>
<svg style="left:1708px;top:684px" width="8" height="44" viewBox="0 0 8 44"><g fill="#b0b0b0"><circle cx="4" cy="9" r="3.4"/><circle cx="4" cy="22" r="3.4"/><circle cx="4" cy="35" r="3.4"/></g></svg>
<div style="position:absolute;left:1716px;top:703px;width:661px;height:8px;background:#d6d6d6;"></div>
<div style="position:absolute;left:2024px;top:703px;width:44px;height:8px;background:#fbfbfb;"></div>
<svg style="left:2024px;top:703px" width="44" height="8" viewBox="0 0 44 8"><g fill="#b0b0b0"><circle cx="9" cy="4" r="3.4"/><circle cx="22" cy="4" r="3.4"/><circle cx="35" cy="4" r="3.4"/></g></svg>
<div style="position:absolute;left:2377px;top:265px;width:3px;height:883px;background:#3a3a3a;"></div>
<div class="t" style="left:1954.0px;width:200px;text-align:center;top:279.5px;font-size:24px;color:#fff;font-weight:700;">Long</div>
<div style="position:absolute;left:1731.5px;top:329.5px;width:209.5px;height:25px;background:#3c3c3c;"></div>
<div style="position:absolute;left:1731.5px;top:354.5px;width:209.5px;height:30px;background:#1a1a1a;border:1px solid #2f2f2f;border-top:none;box-sizing:border-box;"></div>
<div class="t" style="left:1731.5px;width:209.5px;text-align:center;top:334.2px;font-size:17px;color:#fff;font-weight:400;-webkit-text-stroke:0.55px #fff;transform:scaleX(1.03);">Time Frame:</div>
<div class="t" style="left:1739.0px;top:359.8px;font-size:18px;color:#d6d6d6;font-weight:400;transform:scaleX(1.175);transform-origin:0 0;">Current timeframe</div>
<svg style="left:1919.5px;top:363.5px" width="14" height="10" viewBox="0 0 14 10"><path d="M1.8 1.8 L7 8.2 L12.2 1.8" fill="none" stroke="#e8e8e8" stroke-width="3" stroke-linecap="round" stroke-linejoin="miter"/></svg>
<div style="position:absolute;left:2151.5px;top:329.5px;width:209.5px;height:25px;background:#3c3c3c;"></div>
<div style="position:absolute;left:2151.5px;top:354.5px;width:209.5px;height:30px;background:#1a1a1a;border:1px solid #2f2f2f;border-top:none;box-sizing:border-box;"></div>
<div class="t" style="left:2151.5px;width:209.5px;text-align:center;top:334.2px;font-size:17px;color:#fff;font-weight:400;-webkit-text-stroke:0.55px #fff;transform:scaleX(1.03);">Time Frame:</div>
<div class="t" style="left:2159.0px;top:359.8px;font-size:18px;color:#d6d6d6;font-weight:400;transform:scaleX(1.175);transform-origin:0 0;">Current timeframe</div>
<svg style="left:2339.5px;top:363.5px" width="14" height="10" viewBox="0 0 14 10"><path d="M1.8 1.8 L7 8.2 L12.2 1.8" fill="none" stroke="#e8e8e8" stroke-width="3" stroke-linecap="round" stroke-linejoin="miter"/></svg>
<div style="position:absolute;left:1731.5px;top:414.6px;width:209.5px;height:25px;background:#3c3c3c;"></div>
<div style="position:absolute;left:1731.5px;top:439.6px;width:209.5px;height:30px;background:#1a1a1a;border:1px solid #2f2f2f;border-top:none;box-sizing:border-box;"></div>
<div class="t" style="left:1731.5px;width:209.5px;text-align:center;top:419.3px;font-size:17px;color:#fff;font-weight:400;-webkit-text-stroke:0.55px #fff;transform:scaleX(1.05);">Bar:</div>
<div class="t" style="left:1739.0px;top:444.9px;font-size:18px;color:#d6d6d6;font-weight:400;transform:scaleX(1.135);transform-origin:0 0;">Current bar</div>
<svg style="left:1919.5px;top:448.6px" width="14" height="10" viewBox="0 0 14 10"><path d="M1.8 1.8 L7 8.2 L12.2 1.8" fill="none" stroke="#e8e8e8" stroke-width="3" stroke-linecap="round" stroke-linejoin="miter"/></svg>
<div style="position:absolute;left:2151.5px;top:414.6px;width:209.5px;height:25px;background:#3c3c3c;"></div>
<div style="position:absolute;left:2151.5px;top:439.6px;width:209.5px;height:30px;background:#1a1a1a;border:1px solid #2f2f2f;border-top:none;box-sizing:border-box;"></div>
<div class="t" style="left:2151.5px;width:209.5px;text-align:center;top:419.3px;font-size:17px;color:#fff;font-weight:400;-webkit-text-stroke:0.55px #fff;transform:scaleX(1.05);">Bar:</div>
<div class="t" style="left:2159.0px;top:444.9px;font-size:18px;color:#d6d6d6;font-weight:400;transform:scaleX(1.135);transform-origin:0 0;">Current bar</div>
<svg style="left:2339.5px;top:448.6px" width="14" height="10" viewBox="0 0 14 10"><path d="M1.8 1.8 L7 8.2 L12.2 1.8" fill="none" stroke="#e8e8e8" stroke-width="3" stroke-linecap="round" stroke-linejoin="miter"/></svg>
<div style="position:absolute;left:1731.5px;top:499.7px;width:209.5px;height:25px;background:#3c3c3c;"></div>
<div style="position:absolute;left:1731.5px;top:524.7px;width:209.5px;height:30px;background:#1a1a1a;border:1px solid #2f2f2f;border-top:none;box-sizing:border-box;"></div>
<div class="t" style="left:1731.5px;width:209.5px;text-align:center;top:504.4px;font-size:17px;color:#fff;font-weight:400;-webkit-text-stroke:0.55px #fff;transform:scaleX(1.0);">Type:</div>
<div class="t" style="left:1739.0px;top:530.0px;font-size:18px;color:#d6d6d6;font-weight:400;transform:scaleX(0.953);transform-origin:0 0;">RSI.RSI()</div>
<svg style="left:1919.5px;top:533.7px" width="14" height="10" viewBox="0 0 14 10"><path d="M1.8 1.8 L7 8.2 L12.2 1.8" fill="none" stroke="#e8e8e8" stroke-width="3" stroke-linecap="round" stroke-linejoin="miter"/></svg>
<div style="position:absolute;left:2151.5px;top:499.7px;width:209.5px;height:25px;background:#3c3c3c;"></div>
<div style="position:absolute;left:2151.5px;top:524.7px;width:209.5px;height:30px;background:#1a1a1a;border:1px solid #2f2f2f;border-top:none;box-sizing:border-box;"></div>
<div class="t" style="left:2151.5px;width:209.5px;text-align:center;top:504.4px;font-size:17px;color:#fff;font-weight:400;-webkit-text-stroke:0.55px #fff;transform:scaleX(1.0);">Type:</div>
<div class="t" style="left:2159.0px;top:530.0px;font-size:18px;color:#d6d6d6;font-weight:400;transform:scaleX(1.084);transform-origin:0 0;">Fixed</div>
<svg style="left:2339.5px;top:533.7px" width="14" height="10" viewBox="0 0 14 10"><path d="M1.8 1.8 L7 8.2 L12.2 1.8" fill="none" stroke="#e8e8e8" stroke-width="3" stroke-linecap="round" stroke-linejoin="miter"/></svg>
<div style="position:absolute;left:1956.5px;top:464.3px;width:180px;height:25px;background:#3c3c3c;"></div>
<div style="position:absolute;left:1956.5px;top:489.3px;width:180px;height:30px;background:#1a1a1a;border:1px solid #2f2f2f;border-top:none;box-sizing:border-box;"></div>
<div class="t" style="left:1956.5px;width:180px;text-align:center;top:469.0px;font-size:17px;color:#fff;font-weight:400;-webkit-text-stroke:0.55px #fff;transform:scaleX(1.097);">Operator:</div>
<div class="t" style="left:1964.0px;top:494.6px;font-size:18px;color:#d6d6d6;font-weight:400;transform:scaleX(1.083);transform-origin:0 0;">Less than</div>
<svg style="left:2115.0px;top:498.3px" width="14" height="10" viewBox="0 0 14 10"><path d="M1.8 1.8 L7 8.2 L12.2 1.8" fill="none" stroke="#e8e8e8" stroke-width="3" stroke-linecap="round" stroke-linejoin="miter"/></svg>
<div style="position:absolute;left:1731.5px;top:584.5px;width:209.5px;height:24px;background:#3c3c3c;"></div>
<div style="position:absolute;left:1731.5px;top:608.5px;width:209.5px;height:42px;background:#2b2b2d;"></div>
<div class="t" style="left:1736.2px;width:200px;text-align:center;top:589.7px;font-size:16.4px;color:#fff;font-weight:400;-webkit-text-stroke:0.55px #fff;transform:scaleX(1.09);">Value:</div>
<div class="t" style="left:1736.2px;width:200px;text-align:center;top:619.0px;font-size:21.3px;color:#d0d0d0;font-weight:400;">RSI.RSI</div>
<div style="position:absolute;left:2151.5px;top:584.5px;width:209.5px;height:25px;background:#3c3c3c;"></div>
<div style="position:absolute;left:2151.5px;top:609.5px;width:209.5px;height:30px;background:#3a3a3c;"></div>
<div class="t" style="left:2156.2px;width:200px;text-align:center;top:589.7px;font-size:16.4px;color:#fff;font-weight:400;-webkit-text-stroke:0.55px #fff;transform:scaleX(1.09);">Value:</div>
<div class="t" style="left:2159.5px;top:614.3px;font-size:18px;color:#c8c8c8;font-weight:400;transform:scaleX(1.12);transform-origin:0 0;">30</div>
<div class="t" style="left:1954.0px;width:200px;text-align:center;top:726.5px;font-size:24px;color:#fff;font-weight:700;">Short</div>
<div style="position:absolute;left:1731.5px;top:775.5px;width:209.5px;height:25px;background:#3c3c3c;"></div>
<div style="position:absolute;left:1731.5px;top:800.5px;width:209.5px;height:30px;background:#1a1a1a;border:1px solid #2f2f2f;border-top:none;box-sizing:border-box;"></div>
<div class="t" style="left:1731.5px;width:209.5px;text-align:center;top:780.2px;font-size:17px;color:#fff;font-weight:400;-webkit-text-stroke:0.55px #fff;transform:scaleX(1.03);">Time Frame:</div>
<div class="t" style="left:1739.0px;top:805.8px;font-size:18px;color:#d6d6d6;font-weight:400;transform:scaleX(1.175);transform-origin:0 0;">Current timeframe</div>
<svg style="left:1919.5px;top:809.5px" width="14" height="10" viewBox="0 0 14 10"><path d="M1.8 1.8 L7 8.2 L12.2 1.8" fill="none" stroke="#e8e8e8" stroke-width="3" stroke-linecap="round" stroke-linejoin="miter"/></svg>
<div style="position:absolute;left:2151.5px;top:775.5px;width:209.5px;height:25px;background:#3c3c3c;"></div>
<div style="position:absolute;left:2151.5px;top:800.5px;width:209.5px;height:30px;background:#1a1a1a;border:1px solid #2f2f2f;border-top:none;box-sizing:border-box;"></div>
<div class="t" style="left:2151.5px;width:209.5px;text-align:center;top:780.2px;font-size:17px;color:#fff;font-weight:400;-webkit-text-stroke:0.55px #fff;transform:scaleX(1.03);">Time Frame:</div>
<div class="t" style="left:2159.0px;top:805.8px;font-size:18px;color:#d6d6d6;font-weight:400;transform:scaleX(1.175);transform-origin:0 0;">Current timeframe</div>
<svg style="left:2339.5px;top:809.5px" width="14" height="10" viewBox="0 0 14 10"><path d="M1.8 1.8 L7 8.2 L12.2 1.8" fill="none" stroke="#e8e8e8" stroke-width="3" stroke-linecap="round" stroke-linejoin="miter"/></svg>
<div style="position:absolute;left:1731.5px;top:860.6px;width:209.5px;height:25px;background:#3c3c3c;"></div>
<div style="position:absolute;left:1731.5px;top:885.6px;width:209.5px;height:30px;background:#1a1a1a;border:1px solid #2f2f2f;border-top:none;box-sizing:border-box;"></div>
<div class="t" style="left:1731.5px;width:209.5px;text-align:center;top:865.3px;font-size:17px;color:#fff;font-weight:400;-webkit-text-stroke:0.55px #fff;transform:scaleX(1.05);">Bar:</div>
<div class="t" style="left:1739.0px;top:890.9px;font-size:18px;color:#d6d6d6;font-weight:400;transform:scaleX(1.135);transform-origin:0 0;">Current bar</div>
<svg style="left:1919.5px;top:894.6px" width="14" height="10" viewBox="0 0 14 10"><path d="M1.8 1.8 L7 8.2 L12.2 1.8" fill="none" stroke="#e8e8e8" stroke-width="3" stroke-linecap="round" stroke-linejoin="miter"/></svg>
<div style="position:absolute;left:2151.5px;top:860.6px;width:209.5px;height:25px;background:#3c3c3c;"></div>
<div style="position:absolute;left:2151.5px;top:885.6px;width:209.5px;height:30px;background:#1a1a1a;border:1px solid #2f2f2f;border-top:none;box-sizing:border-box;"></div>
<div class="t" style="left:2151.5px;width:209.5px;text-align:center;top:865.3px;font-size:17px;color:#fff;font-weight:400;-webkit-text-stroke:0.55px #fff;transform:scaleX(1.05);">Bar:</div>
<div class="t" style="left:2159.0px;top:890.9px;font-size:18px;color:#d6d6d6;font-weight:400;transform:scaleX(1.135);transform-origin:0 0;">Current bar</div>
<svg style="left:2339.5px;top:894.6px" width="14" height="10" viewBox="0 0 14 10"><path d="M1.8 1.8 L7 8.2 L12.2 1.8" fill="none" stroke="#e8e8e8" stroke-width="3" stroke-linecap="round" stroke-linejoin="miter"/></svg>
<div style="position:absolute;left:1731.5px;top:945.7px;width:209.5px;height:25px;background:#3c3c3c;"></div>
<div style="position:absolute;left:1731.5px;top:970.7px;width:209.5px;height:30px;background:#1a1a1a;border:1px solid #2f2f2f;border-top:none;box-sizing:border-box;"></div>
<div class="t" style="left:1731.5px;width:209.5px;text-align:center;top:950.4px;font-size:17px;color:#fff;font-weight:400;-webkit-text-stroke:0.55px #fff;transform:scaleX(1.0);">Type:</div>
<div class="t" style="left:1739.0px;top:976.0px;font-size:18px;color:#d6d6d6;font-weight:400;transform:scaleX(0.953);transform-origin:0 0;">RSI.RSI()</div>
<svg style="left:1919.5px;top:979.7px" width="14" height="10" viewBox="0 0 14 10"><path d="M1.8 1.8 L7 8.2 L12.2 1.8" fill="none" stroke="#e8e8e8" stroke-width="3" stroke-linecap="round" stroke-linejoin="miter"/></svg>
<div style="position:absolute;left:2151.5px;top:945.7px;width:209.5px;height:25px;background:#3c3c3c;"></div>
<div style="position:absolute;left:2151.5px;top:970.7px;width:209.5px;height:30px;background:#1a1a1a;border:1px solid #2f2f2f;border-top:none;box-sizing:border-box;"></div>
<div class="t" style="left:2151.5px;width:209.5px;text-align:center;top:950.4px;font-size:17px;color:#fff;font-weight:400;-webkit-text-stroke:0.55px #fff;transform:scaleX(1.0);">Type:</div>
<div class="t" style="left:2159.0px;top:976.0px;font-size:18px;color:#d6d6d6;font-weight:400;transform:scaleX(1.084);transform-origin:0 0;">Fixed</div>
<svg style="left:2339.5px;top:979.7px" width="14" height="10" viewBox="0 0 14 10"><path d="M1.8 1.8 L7 8.2 L12.2 1.8" fill="none" stroke="#e8e8e8" stroke-width="3" stroke-linecap="round" stroke-linejoin="miter"/></svg>
<div style="position:absolute;left:1956.5px;top:910.3px;width:180px;height:25px;background:#3c3c3c;"></div>
<div style="position:absolute;left:1956.5px;top:935.3px;width:180px;height:30px;background:#1a1a1a;border:1px solid #2f2f2f;border-top:none;box-sizing:border-box;"></div>
<div class="t" style="left:1956.5px;width:180px;text-align:center;top:915.0px;font-size:17px;color:#fff;font-weight:400;-webkit-text-stroke:0.55px #fff;transform:scaleX(1.097);">Operator:</div>
<div class="t" style="left:1964.0px;top:940.6px;font-size:18px;color:#d6d6d6;font-weight:400;transform:scaleX(1.123);transform-origin:0 0;">Greater than</div>
<svg style="left:2115.0px;top:944.3px" width="14" height="10" viewBox="0 0 14 10"><path d="M1.8 1.8 L7 8.2 L12.2 1.8" fill="none" stroke="#e8e8e8" stroke-width="3" stroke-linecap="round" stroke-linejoin="miter"/></svg>
<div style="position:absolute;left:1731.5px;top:1030.5px;width:209.5px;height:24px;background:#3c3c3c;"></div>
<div style="position:absolute;left:1731.5px;top:1054.5px;width:209.5px;height:42px;background:#2b2b2d;"></div>
<div class="t" style="left:1736.2px;width:200px;text-align:center;top:1035.7px;font-size:16.4px;color:#fff;font-weight:400;-webkit-text-stroke:0.55px #fff;transform:scaleX(1.09);">Value:</div>
<div class="t" style="left:1736.2px;width:200px;text-align:center;top:1065.0px;font-size:21.3px;color:#d0d0d0;font-weight:400;">RSI.RSI</div>
<div style="position:absolute;left:2151.5px;top:1030.5px;width:209.5px;height:25px;background:#3c3c3c;"></div>
<div style="position:absolute;left:2151.5px;top:1055.5px;width:209.5px;height:30px;background:#3a3a3c;"></div>
<div class="t" style="left:2156.2px;width:200px;text-align:center;top:1035.7px;font-size:16.4px;color:#fff;font-weight:400;-webkit-text-stroke:0.55px #fff;transform:scaleX(1.09);">Value:</div>
<div class="t" style="left:2159.5px;top:1060.3px;font-size:18px;color:#c8c8c8;font-weight:400;transform:scaleX(1.12);transform-origin:0 0;">70</div>
<div style="position:absolute;left:109px;top:1148px;width:2268px;height:1px;background:#353535;"></div>
<svg style="left:0;top:1140px" width="60" height="43" viewBox="0 0 60 43"><defs><radialGradient id="hl" cx="0.5" cy="0.1" r="0.9"><stop offset="0" stop-color="#fafafa"/><stop offset="0.45" stop-color="#9a9a9a"/><stop offset="1" stop-color="#3a3a3a" stop-opacity="0"/></radialGradient></defs><circle cx="30.2" cy="30.4" r="14.8" fill="#323232" stroke="#464646" stroke-width="0.8"/><ellipse cx="30.4" cy="24.5" rx="11" ry="8.5" fill="url(#hl)"/></svg>
<div style="position:absolute;left:61px;top:1148px;width:111px;height:35px;border-left:1.5px solid #2c7fd6;border-right:1.5px solid #2c7fd6;box-sizing:border-box;"></div>
<div class="t" style="left:71.4px;top:1159.2px;font-size:18.8px;color:#1e8bff;font-weight:700;">Designer</div>
<div style="position:absolute;left:172px;top:1149px;width:108px;height:34px;background:#3b3b3f;"></div>
<div class="t" style="left:181.5px;top:1158.2px;font-size:19px;color:#d2d2d2;font-weight:400;">Logic</div>
<div style="position:absolute;left:282px;top:1149px;width:108px;height:34px;background:#3b3b3f;"></div>
<div class="t" style="left:290.8px;top:1158.2px;font-size:19px;color:#d2d2d2;font-weight:400;">ATM</div>
<div style="position:absolute;left:2086.0px;top:1075.0px;width:420px;height:33px;box-sizing:border-box;background:#1c5c95;border-top:4px solid #fff;border-bottom:4px solid #fff;transform:rotate(-46.5deg);transform-origin:50% 50%;"><div style="position:absolute;left:100px;top:-1.5px;font-family:'Liberation Mono',monospace;font-weight:700;font-size:24.5px;line-height:25px;white-space:nowrap;letter-spacing:-0.6px;-webkit-text-stroke:0.6px currentColor;"><span style="color:#e63a3f">T</span><span style="color:#fff">rading</span><span style="color:#a9c6ff">chat</span><span style="color:#fff">.org</span></div></div>
</body></html>
